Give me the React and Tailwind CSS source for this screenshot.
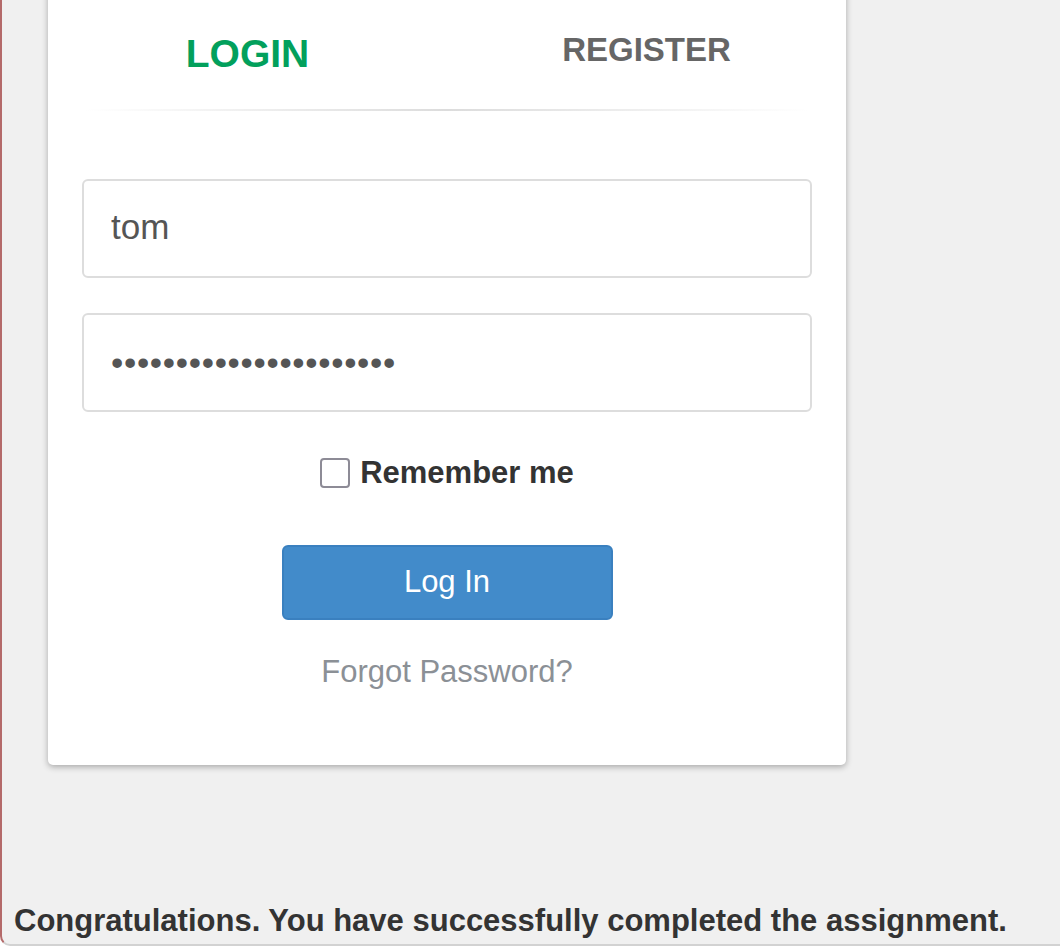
import { useState } from "react";

export default function App() {
  const [remember, setRemember] = useState(false);

  return (
    <div
      className="h-[946px] overflow-hidden bg-[#f0f0f0] border-l-2 border-b-2 border-l-[#b46a6a] border-b-[#d2d2d2] rounded-bl-[10px] flex flex-col"
      style={{ fontFamily: '"Liberation Sans", Arial, sans-serif' }}
    >
      <div className="ml-[46px] w-[798px] -mt-[20px] bg-white rounded-[5px] shadow-[0_2px_6px_rgba(0,0,0,0.3)] px-[34px] pb-[69px]">
        <div className="grid grid-cols-2 -mx-[34px] pt-[54px] h-[129px]">
          <div className="flex justify-center">
            <span className="text-[39px] leading-none font-bold text-[#02a05c]">LOGIN</span>
          </div>
          <div className="flex justify-center">
            <span className="text-[33px] leading-none font-bold text-[#666] -mt-[1px]">REGISTER</span>
          </div>
        </div>
        <div className="h-[2px] mx-[3px] bg-gradient-to-r from-white via-[#dcdcdc] to-white" />

        <form className="flex flex-col pt-[68px]" onSubmit={(e) => e.preventDefault()}>
          <input
            type="text"
            defaultValue="tom"
            className="h-[99px] w-full border-2 border-[#dddddd] rounded-[6px] px-[27px] pb-[4px] text-[35px] text-[#555] outline-none"
          />
          <input
            type="password"
            defaultValue="aaaaaaaaaaaaaaaaaaaaaa"
            className="h-[99px] w-full mt-[35px] border-2 border-[#dddddd] rounded-[6px] px-[27px] text-[35px] tracking-[0.7px] text-[#555] outline-none"
          />

          <label className="mt-[45px] flex items-center justify-center gap-[10px] cursor-pointer">
            <span
              onClick={() => setRemember(!remember)}
              className="w-[30px] h-[30px] rounded-[4px] border-2 border-[#8d8b96] bg-white flex items-center justify-center"
            >
              {remember && (
                <svg viewBox="0 0 24 24" className="w-[22px] h-[22px]" fill="none" stroke="#333" strokeWidth="3">
                  <path d="M5 12l5 5 9-10" />
                </svg>
              )}
            </span>
            <span className="text-[31px] font-bold text-[#333] leading-none">Remember me</span>
          </label>

          <div className="mt-[57px] flex justify-center">
            <button
              type="submit"
              className="w-[331px] h-[75px] bg-[#428bca] border-2 border-[#3a80bf] rounded-[6px] text-white text-[31px]"
            >
              Log In
            </button>
          </div>

          <div className="mt-[29px] text-center">
            <a href="#" className="text-[31px] text-[#8b9096]">
              Forgot Password?
            </a>
          </div>
        </form>
      </div>

      <div className="mt-auto pl-[12px] pb-[8px] text-[31px] font-bold text-[#333] leading-none">
        Congratulations. You have successfully completed the assignment.
      </div>
    </div>
  );
}
